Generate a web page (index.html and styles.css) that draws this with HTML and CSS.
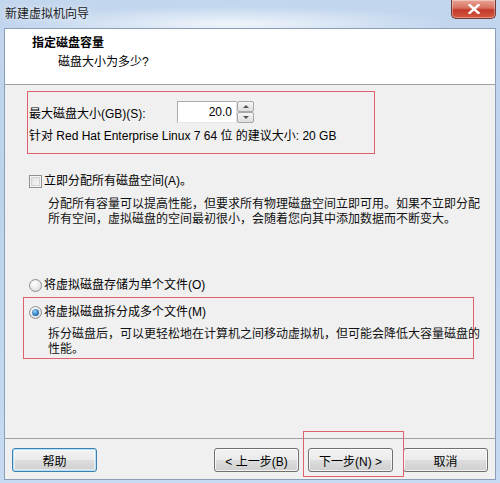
FILE: index.html
```html
<!DOCTYPE html>
<html lang="zh-CN">
<head>
    <meta charset="UTF-8">
    <title>新建虚拟机向导</title>
    <link rel="stylesheet" href="styles.css">
</head>
<body>
    <div class="window">
        <div class="titlebar">
            <span class="title">新建虚拟机向导</span>
            <button class="close-btn" aria-label="关闭">
                <svg width="12" height="10" viewBox="0 0 12 10">
                    <path d="M1.5 1 L10.5 9 M10.5 1 L1.5 9" stroke="#fff" stroke-width="2.4" stroke-linecap="square"/>
                </svg>
            </button>
        </div>

        <div class="client">
            <div class="header">
                <h1>指定磁盘容量</h1>
                <p>磁盘大小为多少?</p>
            </div>

            <div class="content">
                <div class="mark size-box">
                    <div class="size-row">
                        <label for="diskSize">最大磁盘大小(GB)(S):</label>
                        <div class="spin">
                            <input type="text" id="diskSize" value="20.0">
                            <div class="spin-btns">
                                <span class="spin-up"></span>
                                <span class="spin-down"></span>
                            </div>
                        </div>
                    </div>
                    <p class="hint">针对 Red Hat Enterprise Linux 7 64 位 的建议大小: 20 GB</p>
                </div>

                <div class="option check-option">
                    <span class="checkbox"></span>
                    <span>立即分配所有磁盘空间(A)。</span>
                </div>
                <p class="desc">
                    <span>分配所有容量可以提高性能，但要求所有物理磁盘空间立即可用。如果不立即分配</span>
                    <span>所有空间，虚拟磁盘的空间最初很小，会随着您向其中添加数据而不断变大。</span>
                </p>

                <div class="option radio-option">
                    <span class="radio"></span>
                    <span>将虚拟磁盘存储为单个文件(O)</span>
                </div>

                <div class="mark split-box">
                    <div class="option">
                        <span class="radio checked"></span>
                        <span>将虚拟磁盘拆分成多个文件(M)</span>
                    </div>
                    <p class="desc">
                        <span>拆分磁盘后，可以更轻松地在计算机之间移动虚拟机，但可能会降低大容量磁盘的</span>
                        <span>性能。</span>
                    </p>
                </div>
            </div>

            <div class="footer">
                <button class="btn btn-focus">帮助</button>
                <button class="btn btn-back">&lt; 上一步(B)</button>
                <button class="btn btn-next">下一步(N) &gt;</button>
                <button class="btn btn-cancel">取消</button>
                <div class="next-mark"></div>
            </div>
        </div>
    </div>
</body>
</html>
```

FILE: styles.css
```css
* {
    margin: 0;
    padding: 0;
    box-sizing: border-box;
}

body {
    font-family: "Liberation Sans", "Noto Sans CJK SC", sans-serif;
    font-size: 12px;
    color: #000;
    background: #fff;
}

.window {
    width: 500px;
    height: 483px;
    display: flex;
    flex-direction: column;
    background:
        radial-gradient(ellipse 220px 18px at 230px 24px, rgba(255,255,255,0.75), rgba(255,255,255,0) 100%),
        linear-gradient(180deg, #c2d6ee 0%, #bdd3ec 40%, #c6dbf1 100%);
}

/* title bar */
.titlebar {
    height: 28px;
    display: flex;
    align-items: flex-start;
}

.title {
    padding-left: 5px;
    line-height: 28px;
    color: #1b1b1b;
    text-shadow: 0 0 6px rgba(255,255,255,0.9);
}

.close-btn {
    margin-left: auto;
    margin-right: 4px;
    width: 45px;
    height: 19px;
    border: 1px solid #6f3a36;
    border-top: none;
    border-radius: 0 0 5px 5px;
    background: linear-gradient(180deg, #e9a596 0%, #d8705f 45%, #c4382a 55%, #d25a40 100%);
    box-shadow: inset 0 0 0 1px rgba(255,255,255,0.35);
    display: flex;
    align-items: center;
    justify-content: center;
}

/* client area */
.client {
    margin: 0 4px 3px;
    height: 452px;
    border: 1px solid #8b9fb8;
    background: #f0f0f0;
    display: flex;
    flex-direction: column;
}

.header {
    height: 56px;
    background: #fff;
    border-bottom: 1px solid #a0a0a0;
    padding: 7px 0 0 27px;
}

.header h1 {
    font-size: 12px;
    font-weight: bold;
    line-height: 15px;
}

.header p {
    margin: 4px 0 0 26px;
    line-height: 15px;
}

.content {
    height: 353px;
    padding-top: 6px;
}

.mark {
    border: 1px solid #e0606c;
}

.size-box {
    width: 348px;
    height: 63px;
    margin-left: 22px;
    padding: 9px 0 0 1px;
}

.size-row {
    display: flex;
    align-items: center;
    height: 22px;
}

.size-row label {
    width: 148px;
}

.spin {
    display: flex;
    height: 22px;
}

.spin input {
    width: 60px;
    height: 22px;
    border: 1px solid #abadb3;
    border-right-color: #dbdfe6;
    border-bottom-color: #e3e9ef;
    font: inherit;
    text-align: right;
    padding-right: 4px;
    outline: none;
}

.spin-btns {
    width: 17px;
    display: flex;
    flex-direction: column;
}

.spin-btns span {
    flex: 1;
    border: 1px solid #a8a8a8;
    border-radius: 2px;
    background: linear-gradient(180deg, #f6f6f6, #dedede);
    position: relative;
}

.spin-btns span::after {
    content: "";
    position: absolute;
    left: 5px;
    border-left: 3px solid transparent;
    border-right: 3px solid transparent;
}

.spin-up::after {
    top: 3px;
    border-bottom: 3px solid #555;
}

.spin-down::after {
    top: 3px;
    border-top: 3px solid #555;
}

.hint {
    margin-top: 6px;
    line-height: 15px;
}

.option {
    display: flex;
    align-items: center;
    height: 15px;
    line-height: 15px;
}

.check-option {
    margin: 20px 0 0 24px;
}

.checkbox {
    width: 13px;
    height: 13px;
    margin-right: 2px;
    border: 1px solid #8e8f8f;
    background: linear-gradient(135deg, #dcdcdc, #fbfbfb);
    box-shadow: inset 0 0 0 1px #f4f4f4, inset 0 0 0 2px #d2d2d2;
}

.radio {
    width: 13px;
    height: 13px;
    margin-right: 2px;
    border: 1px solid #8e8f8f;
    border-radius: 50%;
    background: radial-gradient(circle at 40% 35%, #ffffff 0%, #e6e6e6 60%, #cfcfcf 100%);
    position: relative;
}

.radio.checked::after {
    content: "";
    position: absolute;
    left: 2px;
    top: 2px;
    width: 7px;
    height: 7px;
    border-radius: 50%;
    background: radial-gradient(circle at 40% 35%, #9fd3f5 0%, #2e7fc0 55%, #1b4f80 100%);
}

.desc {
    margin: 8px 0 0 43px;
    line-height: 15px;
    color: #111;
}

.desc span {
    display: block;
    white-space: nowrap;
}

.radio-option {
    margin: 51px 0 0 24px;
}

.split-box {
    width: 451px;
    margin: 4px 0 0 18px;
    padding: 7px 0 1px 5px;
    overflow: visible;
}

.split-box .desc {
    margin: 7px 0 0 19px;
}

/* buttons */
.footer {
    flex: 1;
    border-top: 1px solid #a0a0a0;
    padding: 9px 0 0 7px;
    display: flex;
    align-items: flex-start;
    position: relative;
}

.btn {
    width: 85px;
    height: 24px;
    border: 1px solid #707070;
    border-radius: 3px;
    background: linear-gradient(180deg, #f2f2f2 0%, #ebebeb 48%, #dddddd 52%, #cfcfcf 100%);
    font: inherit;
    color: #000;
    box-shadow: inset 0 0 0 1px rgba(255,255,255,0.7);
}

.btn-focus {
    border-color: #3c7fb1;
    box-shadow: inset 0 0 0 1px #b6e0f8, inset 0 0 0 2px rgba(255,255,255,0.5);
}

.btn-back {
    margin-left: auto;
}

.btn-next {
    margin-left: 9px;
}

.btn-cancel {
    margin: 0 7px 0 10px;
}

.next-mark {
    position: absolute;
    left: 298px;
    top: -8px;
    width: 101px;
    height: 46px;
    border: 1px solid #e0606c;
}
```
